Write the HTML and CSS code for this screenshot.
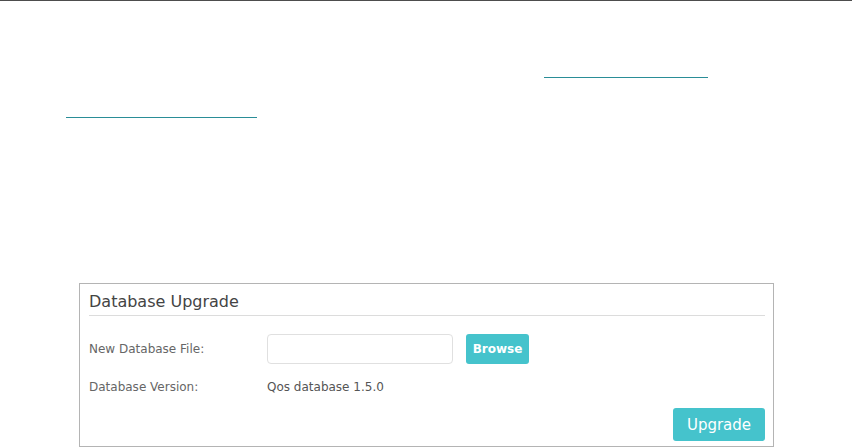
FILE: index.html
```html
<!DOCTYPE html>
<html lang="en">
<head>
    <meta charset="UTF-8">
    <meta name="viewport" content="width=device-width, initial-scale=1.0">
    <title>Database Upgrade</title>
    <link rel="stylesheet" href="styles.css">
</head>
<body>
    <div class="top-rule"></div>

    <div class="intro">
        <a class="link-line first" href="#"></a>
        <a class="link-line second" href="#"></a>
    </div>

    <div class="panel">
        <div class="panel-title">Database Upgrade</div>
        <div class="form-row">
            <label class="form-label" for="dbFile">New Database File:</label>
            <input type="text" id="dbFile" class="file-field">
            <button class="btn btn-browse">Browse</button>
        </div>
        <div class="form-row info-row">
            <span class="form-label">Database Version:</span>
            <span class="form-value">Qos database 1.5.0</span>
        </div>
        <div class="panel-actions">
            <button class="btn btn-upgrade">Upgrade</button>
        </div>
    </div>
</body>
</html>
```

FILE: styles.css
```css
body {
    margin: 0;
    background: #fff;
    font-family: "DejaVu Sans", Verdana, sans-serif;
    color: #666;
}
.top-rule {
    height: 1px;
    background: #4d4d4d;
}
.intro {
    padding-top: 76px;
    height: 206px;
}
.link-line {
    display: block;
    height: 0;
    border-bottom: 1px solid #2a8d97;
}
.link-line.first {
    margin-left: 544px;
    width: 164px;
}
.link-line.second {
    margin-top: 39px;
    margin-left: 66px;
    width: 191px;
}
.panel {
    margin-left: 79px;
    width: 676px;
    border: 1px solid #b4b4b4;
    padding: 0 8px 5px 9px;
}
.panel-title {
    padding-top: 5px;
    line-height: 26px;
    font-size: 16px;
    color: #444;
    border-bottom: 1px solid #dcdcdc;
}
.form-row {
    display: flex;
    align-items: center;
    margin-top: 18px;
    height: 30px;
    font-size: 12px;
}
.form-label {
    width: 178px;
    flex-shrink: 0;
    color: #666;
}
.file-field {
    box-sizing: border-box;
    width: 186px;
    height: 30px;
    margin: 0;
    border: 1px solid #e0e0e0;
    border-radius: 4px;
    outline: none;
}
.btn {
    border: none;
    border-radius: 3px;
    background-color: #45c3cc;
    color: #fff;
    font-family: inherit;
    cursor: pointer;
}
.btn-browse {
    margin-left: 13px;
    width: 63px;
    height: 30px;
    font-size: 12px;
    font-weight: bold;
}
.info-row {
    margin-top: 13px;
    height: 20px;
}
.form-value {
    color: #555;
}
.panel-actions {
    display: flex;
    justify-content: flex-end;
    margin-top: 11px;
}
.btn-upgrade {
    width: 92px;
    height: 33px;
    font-size: 15px;
}
```
